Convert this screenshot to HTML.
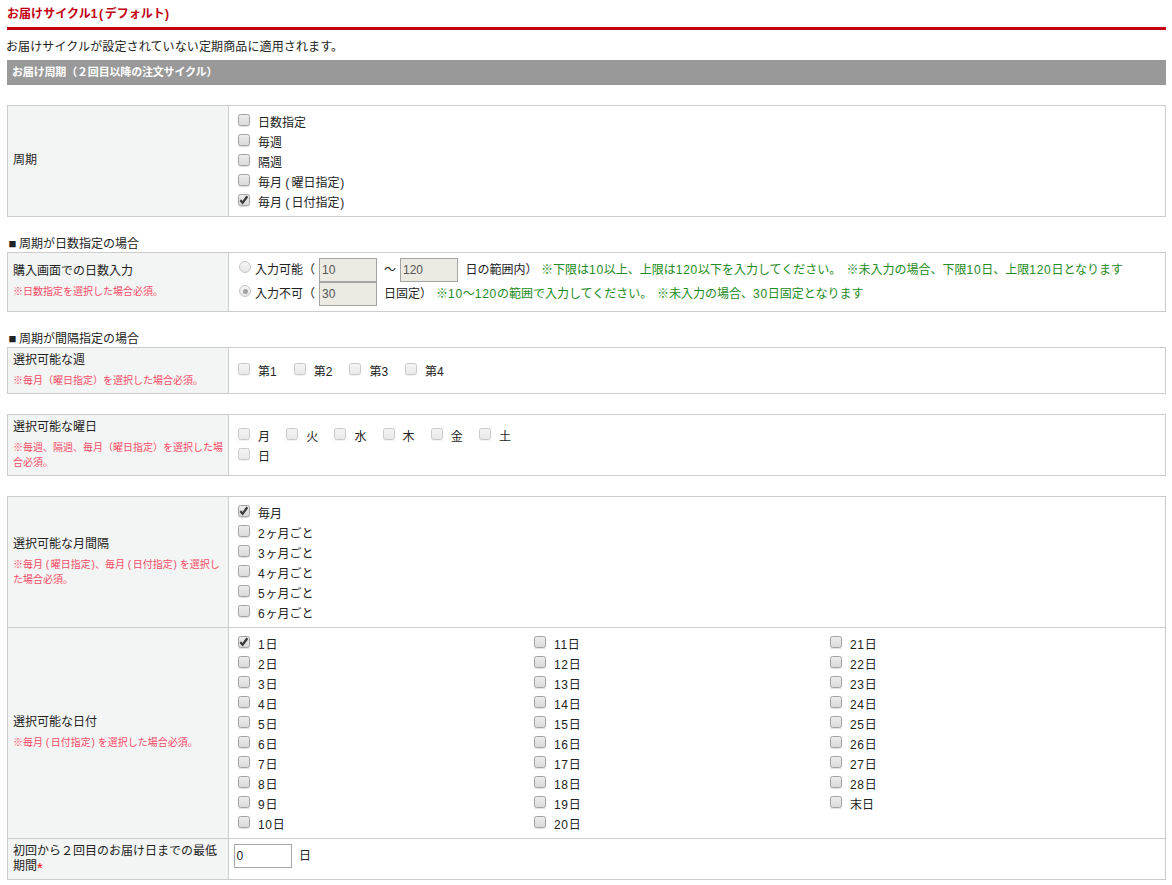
<!DOCTYPE html>
<html lang="ja">
<head>
<meta charset="utf-8">
<title>お届けサイクル</title>
<style>
*{box-sizing:border-box}
html,body{margin:0;padding:0;background:#fff}
body{width:1172px;height:885px;overflow:hidden;position:relative;font-family:"Liberation Sans","Noto Sans CJK JP",sans-serif;font-size:12px;color:#222;line-height:20px}
#wrap{position:absolute;left:7px;top:0;width:1159px;height:885px}
h2{margin:0;height:30px;padding:4px 0 0 0;font-size:12px;line-height:20px;font-weight:bold;color:#c20012;border-bottom:3px solid #c20012;letter-spacing:.05px;white-space:nowrap}
h2 .ls{letter-spacing:1.6px}
p.desc{margin:0;position:absolute;left:-1px;top:37px;line-height:20px;font-size:12px;color:#222;letter-spacing:.12px;white-space:nowrap}
h3{margin:0;position:absolute;left:0;top:60px;width:1159px;height:25px;background:#999;color:#fff;font-size:11px;font-weight:bold;line-height:24px;padding-left:5px;letter-spacing:-.17px;white-space:nowrap}
table{position:absolute;left:0;width:1159px;border-collapse:collapse;table-layout:fixed;border:1px solid #ccc}
th{width:221px;background:#f3f5f4;border:1px solid #ccc;text-align:left;font-weight:normal;padding:0 5px 3px 5px;vertical-align:middle;line-height:20px;color:#222}
th .m{display:block;position:relative;top:0}
td{border:1px solid #ccc;padding:0 5px;vertical-align:middle;background:#fff}
.note{display:block;font-size:10px;color:#f64a66;line-height:15px;margin:3px 0 0 0;position:relative;top:0px}
.sub{position:absolute;left:0;margin:0;font-size:12px;line-height:14px;color:#222;white-space:nowrap}
.sq{display:inline-block;width:12px;text-align:center;font-size:13px;line-height:14px;position:relative;top:0px;left:-.5px}
label{display:inline-block;white-space:nowrap;position:relative}
.t{position:relative;top:2px;left:-1px}
.n{letter-spacing:.7px}
.pl{margin-right:.17em}.pr{margin-left:.08em}
.cb{appearance:none;-webkit-appearance:none;display:inline-block;width:12px;height:12px;margin:0 9px 0 4px;padding:0;border:1px solid #a3a3a3;border-radius:2.5px;background:linear-gradient(#ececec,#dadada);vertical-align:top;position:relative;top:3px;box-shadow:0 1px 1px rgba(0,0,0,.13)}
.cb.dis{border-color:#c9c9c9;background:linear-gradient(#f4f4f4,#e9e9e9);box-shadow:0 1px 1px rgba(0,0,0,.06)}
.cb.ck::after{content:"";position:absolute;left:-1px;top:-1px;width:12px;height:12px;background:#3a3a3a;clip-path:polygon(1.6px 6.9px,3.0px 5.3px,4.5px 7.0px,8.4px 1.6px,10.3px 3.0px,4.7px 10.4px)}
.rd{appearance:none;-webkit-appearance:none;display:inline-block;width:12px;height:12px;margin:0 4px 0 5px;padding:0;border:1px solid #c4c4c4;border-radius:50%;background:linear-gradient(#f6f6f6,#e6e6e6);vertical-align:top;position:relative;top:3px}
.rd.on::after{content:"";position:absolute;left:2.5px;top:2.5px;width:5px;height:5px;border-radius:50%;background:#a2a2a2}
.line{height:20px;line-height:20px;white-space:nowrap}
.l24{height:24px;line-height:24px;white-space:nowrap;position:relative}
.l24 .a{position:absolute;top:0;white-space:nowrap}
.l24 .a.t2{top:0}
.l24 label .t2{position:relative;top:0}
.green{color:#228b22}
.tx{display:inline-block;height:24px;border:1px solid #a5a5a5;background:#ebebe4;color:#545454;font-size:12px;line-height:22px;padding:0 0 0 2px;vertical-align:top;font-family:inherit}
.star{color:#f00;font-size:15px;line-height:0;position:relative;top:3px}
th.last{line-height:15px;padding-bottom:0}
td.lasttd{vertical-align:top;padding-top:5px;line-height:24px}
.dd{display:inline-block;margin-left:7px;position:relative;top:0}
.cols{position:relative;height:200px}
.col{position:absolute;top:0;width:200px}
.col.c1{left:0}.col.c2{left:296px}.col.c3{left:592px}
.wk label{width:55.7px}
.dw label{width:48.2px}
</style>
</head>
<body>
<div id="wrap">
<h2>お届けサイクル<span class="ls">1(</span>デフォルト<span class="ls">)</span></h2>
<p class="desc">お届けサイクルが設定されていない定期商品に適用されます。</p>
<h3>お届け周期（２回目以降の注文サイクル）</h3>
<table style="top:105px;height:112px"><tr><th><span class="m">周期</span></th><td>
<div class="line"><label><input type="checkbox" class="cb"><span class="t">日数指定</span></label></div>
<div class="line"><label><input type="checkbox" class="cb"><span class="t">毎週</span></label></div>
<div class="line"><label><input type="checkbox" class="cb"><span class="t">隔週</span></label></div>
<div class="line"><label><input type="checkbox" class="cb"><span class="t">毎月 <span class="pl">(</span>曜日指定<span class="pr">)</span></span></label></div>
<div class="line"><label><input type="checkbox" class="cb ck" checked><span class="t">毎月 <span class="pl">(</span>日付指定<span class="pr">)</span></span></label></div>
</td></tr></table>
<p class="sub" style="top:237px"><span class="sq">■</span>周期が日数指定の場合</p>
<table style="top:252px;height:60px"><tr><th style="padding-bottom:4px"><span class="m">購入画面での日数入力</span><span class="note">※日数指定を選択した場合必須。</span></th><td>
<div class="l24"><label class="a" style="left:0"><input type="radio" class="rd" disabled><span class="t2">入力可能（</span></label><span class="tx a" style="left:85px;width:58px">10</span><span class="a t2" style="left:150px">～</span><span class="tx a" style="left:166px;width:58px">120</span><span class="a t2" style="left:231.5px">日の範囲内）</span><span class="a t2 green" style="left:307px">※下限は<span class="n">10</span>以上、上限は<span class="n">120</span>以下を入力してください。</span><span class="a t2 green" style="left:612.5px">※未入力の場合、下限<span class="n">10</span>日、上限<span class="n">120</span>日となります</span></div>
<div class="l24"><label class="a" style="left:0"><input type="radio" class="rd on" disabled checked><span class="t2">入力不可（</span></label><span class="tx a" style="left:85px;width:58px">30</span><span class="a t2" style="left:150px">日固定）</span><span class="a t2 green" style="left:202px">※<span class="n">10</span>～<span class="n">120</span>の範囲で入力してください。</span><span class="a t2 green" style="left:423px">※未入力の場合、<span class="n">30</span>日固定となります</span></div>
</td></tr></table>
<p class="sub" style="top:332px"><span class="sq">■</span>周期が間隔指定の場合</p>
<table style="top:347px;height:47px"><tr><th><span class="m">選択可能な週</span><span class="note">※毎月（曜日指定）を選択した場合必須。</span></th><td style="padding-bottom:1px">
<div class="line wk"><label><input type="checkbox" class="cb dis" disabled><span class="t">第<span class="n">1</span></span></label><label><input type="checkbox" class="cb dis" disabled><span class="t">第<span class="n">2</span></span></label><label><input type="checkbox" class="cb dis" disabled><span class="t">第<span class="n">3</span></span></label><label><input type="checkbox" class="cb dis" disabled><span class="t">第<span class="n">4</span></span></label></div>
</td></tr></table>
<table style="top:414px;height:62px"><tr><th><span class="m">選択可能な曜日</span><span class="note">※毎週、隔週、毎月（曜日指定）を選択した場合必須。</span></th><td>
<div class="line dw"><label><input type="checkbox" class="cb dis" disabled><span class="t">月</span></label><label><input type="checkbox" class="cb dis" disabled><span class="t">火</span></label><label><input type="checkbox" class="cb dis" disabled><span class="t">水</span></label><label><input type="checkbox" class="cb dis" disabled><span class="t">木</span></label><label><input type="checkbox" class="cb dis" disabled><span class="t">金</span></label><label><input type="checkbox" class="cb dis" disabled><span class="t">土</span></label></div>
<div class="line dw"><label><input type="checkbox" class="cb dis" disabled><span class="t">日</span></label></div>
</td></tr></table>
<table style="top:496px;height:384px">
<tr style="height:131px"><th><span class="m">選択可能な月間隔</span><span class="note">※毎月 <span class="pl">(</span>曜日指定<span class="pr">)</span>、毎月 <span class="pl">(</span>日付指定<span class="pr">)</span> を選択した場合必須。</span></th><td>
<div class="line"><label><input type="checkbox" class="cb ck" checked><span class="t">毎月</span></label></div>
<div class="line"><label><input type="checkbox" class="cb"><span class="t"><span class="n">2</span>ヶ月ごと</span></label></div>
<div class="line"><label><input type="checkbox" class="cb"><span class="t"><span class="n">3</span>ヶ月ごと</span></label></div>
<div class="line"><label><input type="checkbox" class="cb"><span class="t"><span class="n">4</span>ヶ月ごと</span></label></div>
<div class="line"><label><input type="checkbox" class="cb"><span class="t"><span class="n">5</span>ヶ月ごと</span></label></div>
<div class="line"><label><input type="checkbox" class="cb"><span class="t"><span class="n">6</span>ヶ月ごと</span></label></div>
</td></tr>
<tr style="height:211px"><th style="padding-bottom:4px"><span class="m">選択可能な日付</span><span class="note">※毎月 <span class="pl">(</span>日付指定<span class="pr">)</span> を選択した場合必須。</span></th><td><div class="cols">
<div class="col c1">
<div class="line"><label><input type="checkbox" class="cb ck" checked><span class="t"><span class="n">1</span>日</span></label></div>
<div class="line"><label><input type="checkbox" class="cb"><span class="t"><span class="n">2</span>日</span></label></div>
<div class="line"><label><input type="checkbox" class="cb"><span class="t"><span class="n">3</span>日</span></label></div>
<div class="line"><label><input type="checkbox" class="cb"><span class="t"><span class="n">4</span>日</span></label></div>
<div class="line"><label><input type="checkbox" class="cb"><span class="t"><span class="n">5</span>日</span></label></div>
<div class="line"><label><input type="checkbox" class="cb"><span class="t"><span class="n">6</span>日</span></label></div>
<div class="line"><label><input type="checkbox" class="cb"><span class="t"><span class="n">7</span>日</span></label></div>
<div class="line"><label><input type="checkbox" class="cb"><span class="t"><span class="n">8</span>日</span></label></div>
<div class="line"><label><input type="checkbox" class="cb"><span class="t"><span class="n">9</span>日</span></label></div>
<div class="line"><label><input type="checkbox" class="cb"><span class="t"><span class="n">10</span>日</span></label></div>
</div>
<div class="col c2">
<div class="line"><label><input type="checkbox" class="cb"><span class="t"><span class="n">11</span>日</span></label></div>
<div class="line"><label><input type="checkbox" class="cb"><span class="t"><span class="n">12</span>日</span></label></div>
<div class="line"><label><input type="checkbox" class="cb"><span class="t"><span class="n">13</span>日</span></label></div>
<div class="line"><label><input type="checkbox" class="cb"><span class="t"><span class="n">14</span>日</span></label></div>
<div class="line"><label><input type="checkbox" class="cb"><span class="t"><span class="n">15</span>日</span></label></div>
<div class="line"><label><input type="checkbox" class="cb"><span class="t"><span class="n">16</span>日</span></label></div>
<div class="line"><label><input type="checkbox" class="cb"><span class="t"><span class="n">17</span>日</span></label></div>
<div class="line"><label><input type="checkbox" class="cb"><span class="t"><span class="n">18</span>日</span></label></div>
<div class="line"><label><input type="checkbox" class="cb"><span class="t"><span class="n">19</span>日</span></label></div>
<div class="line"><label><input type="checkbox" class="cb"><span class="t"><span class="n">20</span>日</span></label></div>
</div>
<div class="col c3">
<div class="line"><label><input type="checkbox" class="cb"><span class="t"><span class="n">21</span>日</span></label></div>
<div class="line"><label><input type="checkbox" class="cb"><span class="t"><span class="n">22</span>日</span></label></div>
<div class="line"><label><input type="checkbox" class="cb"><span class="t"><span class="n">23</span>日</span></label></div>
<div class="line"><label><input type="checkbox" class="cb"><span class="t"><span class="n">24</span>日</span></label></div>
<div class="line"><label><input type="checkbox" class="cb"><span class="t"><span class="n">25</span>日</span></label></div>
<div class="line"><label><input type="checkbox" class="cb"><span class="t"><span class="n">26</span>日</span></label></div>
<div class="line"><label><input type="checkbox" class="cb"><span class="t"><span class="n">27</span>日</span></label></div>
<div class="line"><label><input type="checkbox" class="cb"><span class="t"><span class="n">28</span>日</span></label></div>
<div class="line"><label><input type="checkbox" class="cb"><span class="t">末日</span></label></div>
</div>
</div></td></tr>
<tr style="height:41px"><th class="last"><span class="m">初回から２回目のお届け日までの最低期間<span class="star">*</span></span></th><td class="lasttd"><span class="tx w" style="width:58px;background:#fff;color:#222;border-color:#a9a9a9;padding-left:1.5px">0</span><span class="dd">日</span></td></tr>
</table>
</div>
</body>
</html>
